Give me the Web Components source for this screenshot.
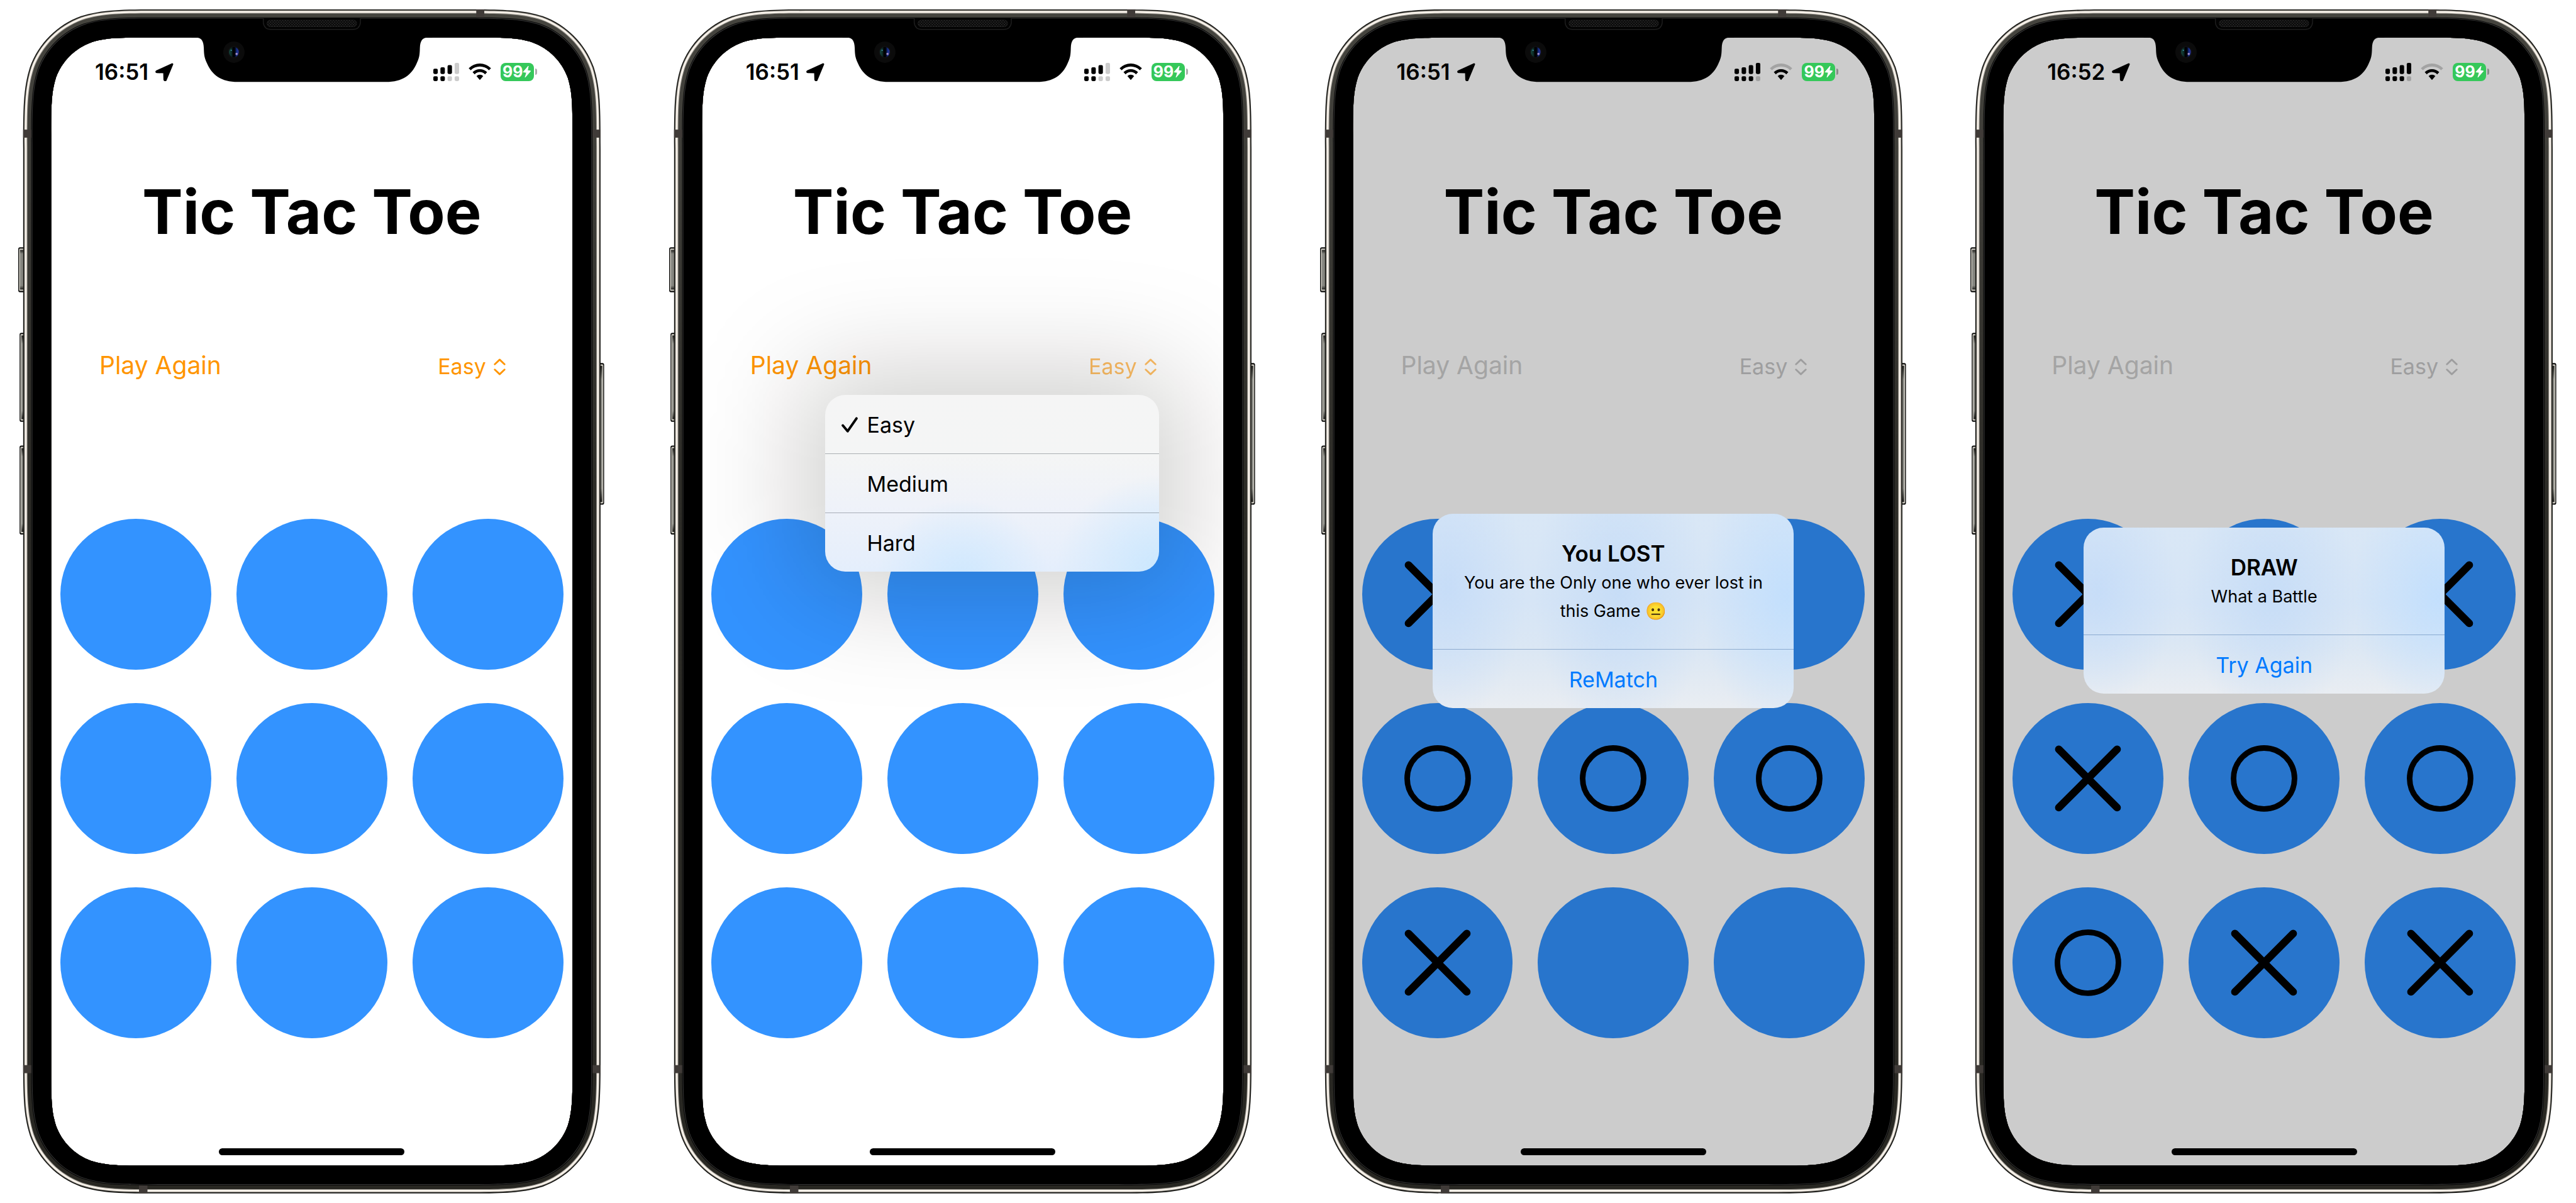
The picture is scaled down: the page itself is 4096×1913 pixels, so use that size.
<!DOCTYPE html>
<html lang="en">
<head>
<meta charset="utf-8">
<title>Tic Tac Toe</title>
<style>
  body { margin: 0; background: #fff; font-family: Inter, "Liberation Sans", sans-serif; color: #000; }
  main { display: flex; gap: 43px; align-items: flex-start; }
  main > phone-frame { flex: 1 1 0; min-width: 0; }
</style>
</head>
<body>
<main>
  <phone-frame>
    <status-bar time="16:51"></status-bar>
    <game-screen level="Easy" board="........."></game-screen>
  </phone-frame>
  <phone-frame>
    <status-bar time="16:51"></status-bar>
    <game-screen level="Easy" board="........." menu></game-screen>
  </phone-frame>
  <phone-frame dimmed>
    <status-bar time="16:51" roaming></status-bar>
    <game-screen level="Easy" board="X..OOOX.." disabled></game-screen>
    <alert-box slot="alert" heading="You LOST" action="ReMatch">You are the Only one who ever lost in this Game 😐</alert-box>
  </phone-frame>
  <phone-frame dimmed>
    <status-bar time="16:52" roaming></status-bar>
    <game-screen level="Easy" board="XOXXOOOXX" disabled></game-screen>
    <alert-box slot="alert" heading="DRAW" action="Try Again">What a Battle</alert-box>
  </phone-frame>
</main>
<script>
/* Continuous-curvature rounded rectangle, as on the device's shell and display. */
function squircle(x, y, w, h, r) {
  const a = 1.52866 * r, b = 1.08849 * r, c = 0.86841 * r, d = 0.63149 * r,
        e = 0.07491 * r, f = 0.37282 * r, g = 0.16906 * r;
  const X = x + w, Y = y + h;
  return `M${x + a} ${y}H${X - a}C${X - b} ${y} ${X - c} ${y} ${X - d} ${y + e}C${X - f} ${y + g} ${X - g} ${y + f} ${X - e} ${y + d}C${X} ${y + c} ${X} ${y + b} ${X} ${y + a}` +
    `V${Y - a}C${X} ${Y - b} ${X} ${Y - c} ${X - e} ${Y - d}C${X - g} ${Y - f} ${X - f} ${Y - g} ${X - d} ${Y - e}C${X - c} ${Y} ${X - b} ${Y} ${X - a} ${Y}` +
    `H${x + a}C${x + b} ${Y} ${x + c} ${Y} ${x + d} ${Y - e}C${x + f} ${Y - g} ${x + g} ${Y - f} ${x + e} ${Y - d}C${x} ${Y - c} ${x} ${Y - b} ${x} ${Y - a}` +
    `V${y + a}C${x} ${y + b} ${x} ${y + c} ${x + e} ${y + d}C${x + g} ${y + f} ${x + f} ${y + g} ${x + d} ${y + e}C${x + c} ${y} ${x + b} ${y} ${x + a} ${y}Z`;
}

class PhoneFrame extends HTMLElement {
  constructor() {
    super();
    const hole = squircle(115, 84.5, 1170, 2532, 142);
    const ring = (i, fill) => `<path fill="${fill}" fill-rule="evenodd" d="${squircle(52 + i, 21 + i, 1296 - 2 * i, 2658 - 2 * i, 205 - i)}${hole}"/>`;
    const button = (x, y, w, h) => `
      <rect x="${x}" y="${y}" width="${w}" height="${h}" rx="4" fill="#0b0b0a"/>
      <rect x="${x + 2}" y="${y + 3}" width="${w - 4}" height="${h - 6}" rx="2" fill="#d6d3ca"/>
      <rect x="${x + 4}" y="${y + 6}" width="${w - 8}" height="${h - 12}" fill="url(#key)"/>`;
    this.attachShadow({ mode: 'open' }).innerHTML = `
      <style>
        :host { display: grid; position: relative; aspect-ratio: 1400 / 2700; box-sizing: border-box; padding: 58px 80px; }
        .screen { position: relative; display: flex; flex-direction: column; box-sizing: border-box; min-width: 0;
                  overflow: hidden; background: #fff; padding: 34px 0 18px; }
        .dim { position: absolute; inset: 0; display: grid; place-items: center; padding-top: 30px; background: rgba(0,0,0,.2); }
        :host(:not([dimmed])) .dim { display: none; }
        .home { width: 295px; height: 11px; border-radius: 6px; background: #000; margin: auto auto 0; }
        .shell { position: absolute; inset: 0; width: 100%; height: 100%; pointer-events: none; }
      </style>
      <div class="screen">
        <slot></slot>
        <div class="home"></div>
        <div class="dim"><slot name="alert"></slot></div>
      </div>
      <svg class="shell" viewBox="0 0 1400 2700" aria-hidden="true">
        <defs>
          <linearGradient id="metal" x1="0" y1="0" x2="0" y2="1">
            <stop offset="0" stop-color="#45443e"/><stop offset=".15" stop-color="#3d3c37"/><stop offset=".4" stop-color="#2d2c27"/><stop offset="1" stop-color="#282722"/>
          </linearGradient>
          <linearGradient id="key" x1="0" y1="0" x2="0" y2="1">
            <stop offset="0" stop-color="#22221f"/><stop offset=".1" stop-color="#868680"/><stop offset=".9" stop-color="#868680"/><stop offset="1" stop-color="#22221f"/>
          </linearGradient>
          <pattern id="mesh" width="6" height="6" patternUnits="userSpaceOnUse">
            <rect width="6" height="6" fill="#050505"/><circle cx="1.5" cy="1.5" r="1.4" fill="#303030"/><circle cx="4.5" cy="4.5" r="1.4" fill="#303030"/>
          </pattern>
          <radialGradient id="lens"><stop offset="0" stop-color="#000"/><stop offset=".4" stop-color="#020306"/><stop offset="1" stop-color="#111"/></radialGradient>
          <linearGradient id="glass"><stop offset="0" stop-color="#16493f"/><stop offset=".3" stop-color="#0a2420"/><stop offset=".4" stop-color="#000"/><stop offset=".6" stop-color="#00030c"/><stop offset=".8" stop-color="#16308c"/><stop offset="1" stop-color="#2b2f8f"/></linearGradient>
        </defs>
        ${button(41, 555, 18, 101)}${button(44, 747, 18, 200)}${button(44, 1000, 18, 200)}${button(1338, 815, 18, 318)}
        ${ring(0, '#12120f')}${ring(2, '#6b6963')}${ring(3.5, '#f7f1e9')}${ring(8, '#96938c')}${ring(9.5, 'url(#metal)')}
        ${ring(18, '#050505')}${ring(19.5, '#3b3b3b')}${ring(20.8, '#000')}
        <g fill="#403b38">
          <rect x="52" y="291" width="18" height="18"/><rect x="1330" y="291" width="18" height="18"/>
          <rect x="52" y="2391" width="18" height="18"/><rect x="1330" y="2391" width="18" height="18"/>
          <rect x="1069" y="21" width="18" height="18"/><rect x="312" y="2661" width="19" height="18"/>
        </g>
        <path d="M430 82V84.500H440C452 84.500 457 92 457.500 108C458 125 459 130 465 143C476 168 496 184 534 184H866C904 184 924 168 935 143C941 130 942 125 942.500 108C943 92 948 84.500 960 84.500H970V82Z"/>
        <path d="M591 41V51Q593 66 608 66H792Q807 66 809 51V41" fill="#020202" stroke="#1e1e1e" stroke-width="2"/>
        <rect x="599.500" y="45" width="201" height="15" rx="7.500" fill="url(#mesh)" stroke="#262626"/>
        <circle cx="525" cy="117" r="24" fill="#0b0b0b"/>
        <circle cx="525" cy="117" r="13.500" fill="url(#lens)"/>
        <ellipse cx="525" cy="117" rx="11" ry="11.500" fill="url(#glass)"/>
        <circle cx="531" cy="121" r="2.500" fill="#a58fc4"/><circle cx="519" cy="113" r="1.500" fill="#3f90a8"/>
      </svg>`;
  }
}

class StatusBar extends HTMLElement {
  connectedCallback() {
    const roaming = this.hasAttribute('roaming');
    const dim = 'rgba(0,0,0,.2)';
    const tops = [132, 123, 108, 93];
    const bars = tops.map((t, i) => {
      const x = 153 + 48 * i;
      return `<rect x="${x}" y="${t}" width="30" height="${168 - t}" rx="9" fill="${!roaming && i > 2 ? dim : '#000'}"/>` +
             `<rect x="${x}" y="183" width="30" height="33" rx="9" fill="${i > (roaming ? 2 : 1) ? dim : '#000'}"/>`;
    }).join('');
    this.attachShadow({ mode: 'open' }).innerHTML = `
      <style>
        :host { display: flex; position: relative; z-index: 1; justify-content: space-between; align-items: center; height: 44px; padding: 0 58px 0 71px; }
        div { display: flex; align-items: center; }
        .left { gap: 11px; font-size: 35px; line-height: 44px; font-weight: 600; }
        .right { gap: 15px; }
        svg { display: block; }
        .battery { gap: 2px; }
        .level { box-sizing: border-box; width: 53px; height: 29px; border-radius: 8px; background: #35c85a; color: #fff;
                 font-size: 25px; font-weight: 700; line-height: 29px; justify-content: center; }
        .nub { width: 3px; height: 10px; border-radius: 0 5px 5px 0; background: rgba(0,0,0,.32); }
      </style>
      <div class="left"><span>${this.getAttribute('time')}</span>
        <svg width="29" height="29" viewBox="324 132 40 40" aria-label="Location"><path d="M361 135L327 150.500Q325.500 152 327.500 152.200L343.500 152.500L344 169Q345.500 171 346.800 169.200Z" stroke="#000" stroke-width="4.500" stroke-linejoin="round"/></svg>
      </div>
      <div class="right">
        <svg width="41" height="29" viewBox="153 93 174 123" aria-label="Signal">${bars}</svg>
        <svg width="36" height="28" viewBox="394 97 151 115" aria-label="Wi-Fi" stroke-linejoin="round">
          <path fill="${roaming ? dim : '#000'}" d="M395 131A105 105 0 0 1 544 131L530 145A86 86 0 0 0 409 145Z"/>
          <path d="M421 158A67 67 0 0 1 518 158L504 172A47 47 0 0 0 435 172Z"/>
          <path d="M447 184A31 31 0 0 1 492 184L469.500 210Z"/>
        </svg>
        <div class="battery"><div class="level"><span>99</span><svg width="14" height="20" viewBox="766 115 60 85" aria-hidden="true"><path fill="#fff" stroke="#fff" stroke-width="4" stroke-linejoin="round" d="M805 119L770 160L793 163L783 196L821 153L799 149Z"/></svg></div><div class="nub"></div></div>
      </div>`;
  }
}

class GameScreen extends HTMLElement {
  connectedCallback() {
    const off = this.hasAttribute('disabled');
    this.attachShadow({ mode: 'open' }).innerHTML = `
      <style>
        :host { display: block; --tint: ${off ? '#cdcdcd' : '#ff9500'}; --tint-level: ${off ? '#c6c6c7' : '#ff9500'}; }
        h1 { margin: 141px 0 0; font-size: 97px; line-height: 120px; font-weight: 700; text-align: center; }
        .bar { display: flex; justify-content: space-between; align-items: baseline; margin: 159px 108px 219px 78px; height: 50px; }
        .again { all: unset; font-size: 39px; line-height: 50px; color: var(--tint); }
      </style>
      <h1>Tic Tac Toe</h1>
      <div class="bar">
        <button class="again" type="button">Play Again</button>
        <level-picker value="${this.getAttribute('level')}"${this.hasAttribute('menu') ? ' open' : ''}></level-picker>
      </div>
      <game-board cells="${this.getAttribute('board')}"></game-board>`;
  }
}

class LevelPicker extends HTMLElement {
  connectedCallback() {
    const value = this.getAttribute('value');
    const levels = ['Easy', 'Medium', 'Hard'];
    const check = '<svg width="26" height="25" viewBox="0 0 37 35" aria-hidden="true"><path d="M3 19L14 32L34 3" fill="none" stroke="#000" stroke-width="5.500" stroke-linecap="round" stroke-linejoin="round"/></svg>';
    this.attachShadow({ mode: 'open' }).innerHTML = `
      <style>
        :host { display: flex; align-items: baseline; color: var(--tint-level); font-size: 34px; line-height: 50px; }
        :host([open]) { position: relative; z-index: 1; }
        label { display: flex; align-items: center; gap: 12px; }
        :host([open]) label { opacity: .6; }
        select { all: unset; text-align: right; text-align-last: right; height: 50px; }
        .menu { position: absolute; top: 70px; right: -4px; width: 531px; border-radius: 32px; overflow: hidden; color: #000;
          background:
            radial-gradient(ellipse 26% 45% at 41% 104%, #cfe8fe, rgba(207,232,254,0)),
            radial-gradient(ellipse 32% 55% at 101% 100%, #cae7fe, rgba(202,231,254,0)),
            linear-gradient(#f5f5f5 0%, #f4f5f5 35%, #eff2f9 62%, #e4eefc 100%); }
        .shadow { position: absolute; top: 30px; right: -44px; width: 611px; height: 360px; border-radius: 60px;
          background: rgba(8,6,0,.19); filter: blur(85px); pointer-events: none; }
        .menu button { all: unset; box-sizing: border-box; display: grid; grid-template-columns: 26px 1fr; gap: 15px; align-items: center;
          width: 100%; height: 93px; padding: 2px 26px 0; }
        .menu button + button { height: 94px; border-top: 1px solid rgba(60,70,80,.4); }
        .menu span { grid-column: 2; }
      </style>
      <label><select aria-label="Level">${levels.map(l => `<option${l === value ? ' selected' : ''}>${l}</option>`).join('')}</select>
        <svg width="19" height="27" viewBox="0 0 27 38" aria-hidden="true"><path d="M2.500 13L13.500 2.500L24.500 13M2.500 25L13.500 35.500L24.500 25" fill="none" stroke="currentColor" stroke-width="4" stroke-linecap="round" stroke-linejoin="round"/></svg>
      </label>
      ${this.hasAttribute('open') ? `<div class="shadow"></div><div class="menu" role="menu">${levels.map(l =>
        `<button type="button" role="menuitemradio" aria-checked="${l === value}">${l === value ? check : ''}<span>${l}</span></button>`).join('')}</div>` : ''}`;
  }
}

class GameBoard extends HTMLElement {
  connectedCallback() {
    const marks = {
      X: '<path d="M104 104L235 235M235 104L104 235" stroke-width="17" stroke-linecap="round"/>',
      O: '<circle cx="169.5" cy="169.5" r="68.5" stroke-width="12.5"/>',
      '.': ''
    };
    this.attachShadow({ mode: 'open' }).innerHTML = `
      <style>
        :host { display: grid; grid-template-columns: repeat(3, 1fr); gap: 53px 40px; padding: 0 16px; }
        button { all: unset; display: block; aspect-ratio: 1; border-radius: 50%; background: #3393ff; }
        svg { display: block; width: 100%; height: 100%; fill: none; stroke: #000; }
      </style>
      ${[...this.getAttribute('cells')].map((m, i) =>
        `<button type="button" aria-label="Cell ${i + 1}"><svg viewBox="0 0 339 339" aria-hidden="true">${marks[m]}</svg></button>`).join('')}`;
  }
}

class AlertBox extends HTMLElement {
  connectedCallback() {
    this.attachShadow({ mode: 'open' }).innerHTML = `
      <style>
        :host { display: block; width: 574px; border-radius: 32px; overflow: hidden; text-align: center;
          background:
            radial-gradient(ellipse 22% 70% at 4% 38%, rgba(197,220,248,.9), rgba(197,220,248,0)),
            radial-gradient(ellipse 24% 78% at 52% 40%, rgba(197,220,247,.9), rgba(197,220,247,0)),
            radial-gradient(ellipse 24% 72% at 98% 42%, rgba(194,223,253,.95), rgba(194,223,253,0)),
            linear-gradient(#d9e7f6 0%, #d6e5f6 45%, #dbe7f4 70%, #e9edf2 100%); }
        .text { padding: 40px 30px 38px; }
        h2 { margin: 0; font-size: 35px; line-height: 47px; font-weight: 600; }
        p { margin: 0; font-size: 27px; line-height: 45px; }
        button { all: unset; box-sizing: border-box; width: 100%; height: 94px; padding-top: 3px; border-top: 1px solid rgba(40,90,150,.4);
          color: #007aff; font-size: 34px; line-height: 44px; }
      </style>
      <div class="text"><h2>${this.getAttribute('heading')}</h2><p><slot></slot></p></div>
      <button type="button">${this.getAttribute('action')}</button>`;
  }
}

customElements.define('phone-frame', PhoneFrame);
customElements.define('status-bar', StatusBar);
customElements.define('level-picker', LevelPicker);
customElements.define('game-board', GameBoard);
customElements.define('game-screen', GameScreen);
customElements.define('alert-box', AlertBox);
</script>
</body>
</html>
